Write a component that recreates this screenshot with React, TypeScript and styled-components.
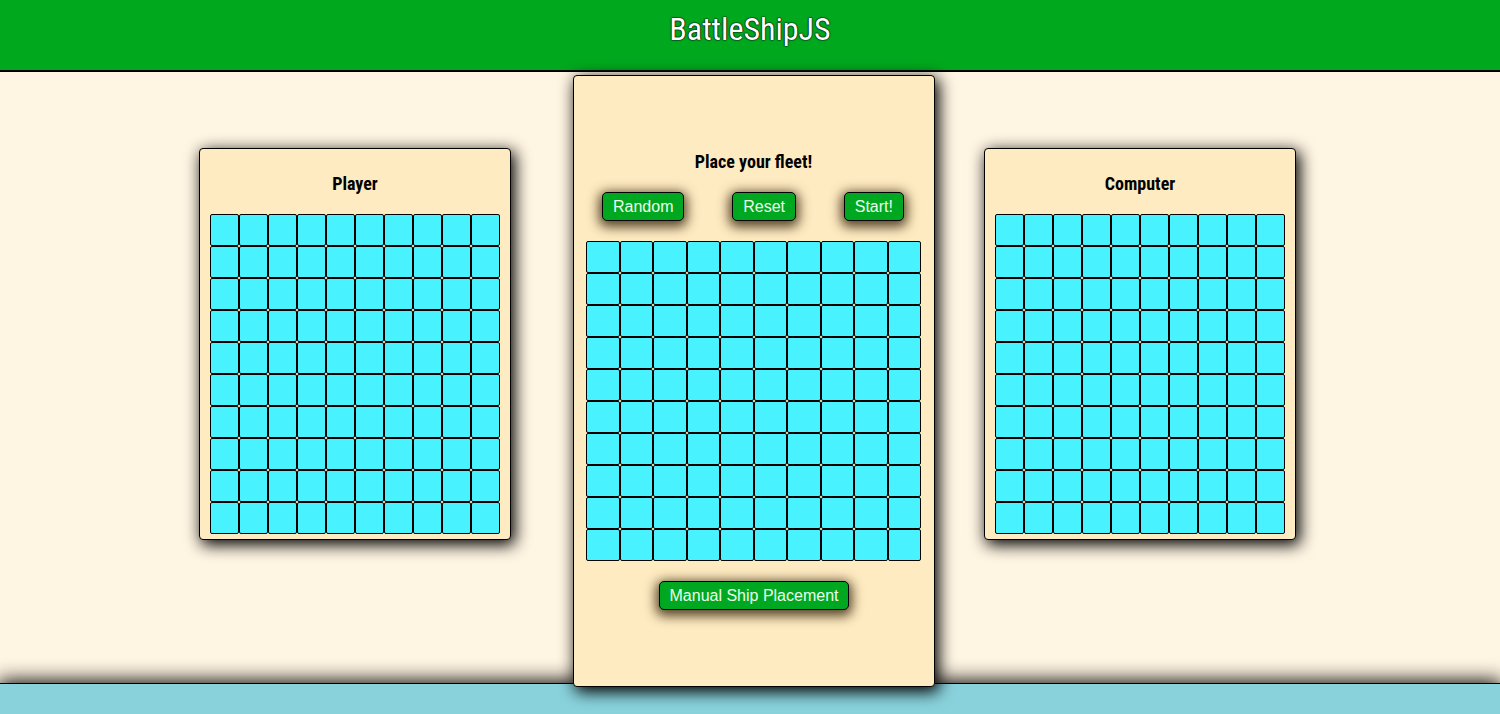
import React from "react";
import styled, { createGlobalStyle } from "styled-components";

const GlobalStyle = createGlobalStyle`
  html, body { margin: 0; padding: 0; }
  body {
    font-family: Roboto, "Liberation Sans", sans-serif;
    background: #fff5e3;
    overflow: hidden;
  }
  * { box-sizing: border-box; }
`;

const Page = styled.div`
  display: flex;
  flex-direction: column;
  width: 1500px;
  height: 714px;
`;

const Header = styled.header`
  height: 72px;
  background: #00a81e;
  border-bottom: 2px solid #000;
  display: flex;
  justify-content: center;
  padding-top: 11px;
  position: relative;
  z-index: 2;
`;

const Title = styled.h1`
  margin: 0;
  font-family: "Roboto Condensed", Roboto, sans-serif;
  font-stretch: condensed;
  font-weight: 400;
  font-size: 32px;
  line-height: 36px;
  color: #fff;
  text-shadow: 0 0 1px #000, 0 0 1px #000, 0 0 2px #012;
`;

const Main = styled.main`
  height: 611px;
  display: flex;
  justify-content: center;
  align-items: flex-start;
  padding-right: 5px;
  background: #fff5e3;
`;

const Card = styled.section<{ $top: number }>`
  background: #ffebc1;
  border: 1px solid #000;
  border-radius: 4px;
  box-shadow: 3px 4px 16px 1px #000;
  margin-top: ${(p) => p.$top}px;
  display: flex;
  flex-direction: column;
`;

const SideCard = styled(Card)<{ $side: "left" | "right" }>`
  width: 312px;
  height: 392px;
  padding: 0 10px 5px;
  ${(p) => (p.$side === "left" ? "margin-right: 62px;" : "margin-left: 49px;")}
`;

const CenterCard = styled(Card)`
  width: 362px;
  height: 612px;
  padding: 0 13px 1px 12px;
  justify-content: center;
  position: relative;
  z-index: 3;
`;

const CardTitle = styled.h2<{ $mt: number }>`
  margin: ${(p) => p.$mt}px 0 20px;
  font-family: "Roboto Condensed", Roboto, sans-serif;
  font-stretch: condensed;
  font-weight: 700;
  font-size: 18px;
  line-height: 21px;
  text-align: center;
  color: #000;
`;

const Board = styled.div`
  display: grid;
  grid-template-columns: repeat(10, 1fr);
  grid-auto-rows: 32px;
`;

const Cell = styled.div`
  background: #48f2fe;
  border: 1px solid #000;
  border-radius: 2px;
`;

const ButtonRow = styled.div`
  display: flex;
  justify-content: space-between;
  padding: 0 17px 0 16px;
  margin-bottom: 20px;
`;

const GreenButton = styled.button`
  font-family: "Liberation Sans", Arial, sans-serif;
  font-size: 16px;
  line-height: 17px;
  padding: 5px 10px;
  color: #eaffea;
  background: #00a822;
  border: 1px solid #000;
  border-radius: 5px;
  box-shadow: 0 3px 12px 3px rgba(40, 25, 0, 0.8);
  cursor: pointer;
`;

const BottomRow = styled.div`
  display: flex;
  justify-content: center;
  margin-top: 20px;
  padding-left: 1px;
`;

const Footer = styled.footer`
  height: 31px;
  background: #89d2dc;
  border-top: 1px solid #000;
  box-shadow: 0 0 20px 2px #000;
  position: relative;
  z-index: 1;
`;

const GameBoard: React.FC = () => (
  <Board>
    {Array.from({ length: 100 }, (_, i) => (
      <Cell key={i} />
    ))}
  </Board>
);

export default function App() {
  return (
    <>
      <GlobalStyle />
      <Page>
        <Header>
          <Title>BattleShipJS</Title>
        </Header>
        <Main>
          <SideCard $top={76} $side="left">
            <CardTitle $mt={24}>Player</CardTitle>
            <GameBoard />
          </SideCard>
          <CenterCard $top={3}>
            <CardTitle $mt={0}>Place your fleet!</CardTitle>
            <ButtonRow>
              <GreenButton>Random</GreenButton>
              <GreenButton>Reset</GreenButton>
              <GreenButton>Start!</GreenButton>
            </ButtonRow>
            <GameBoard />
            <BottomRow>
              <GreenButton>Manual Ship Placement</GreenButton>
            </BottomRow>
          </CenterCard>
          <SideCard $top={76} $side="right">
            <CardTitle $mt={24}>Computer</CardTitle>
            <GameBoard />
          </SideCard>
        </Main>
        <Footer />
      </Page>
    </>
  );
}
